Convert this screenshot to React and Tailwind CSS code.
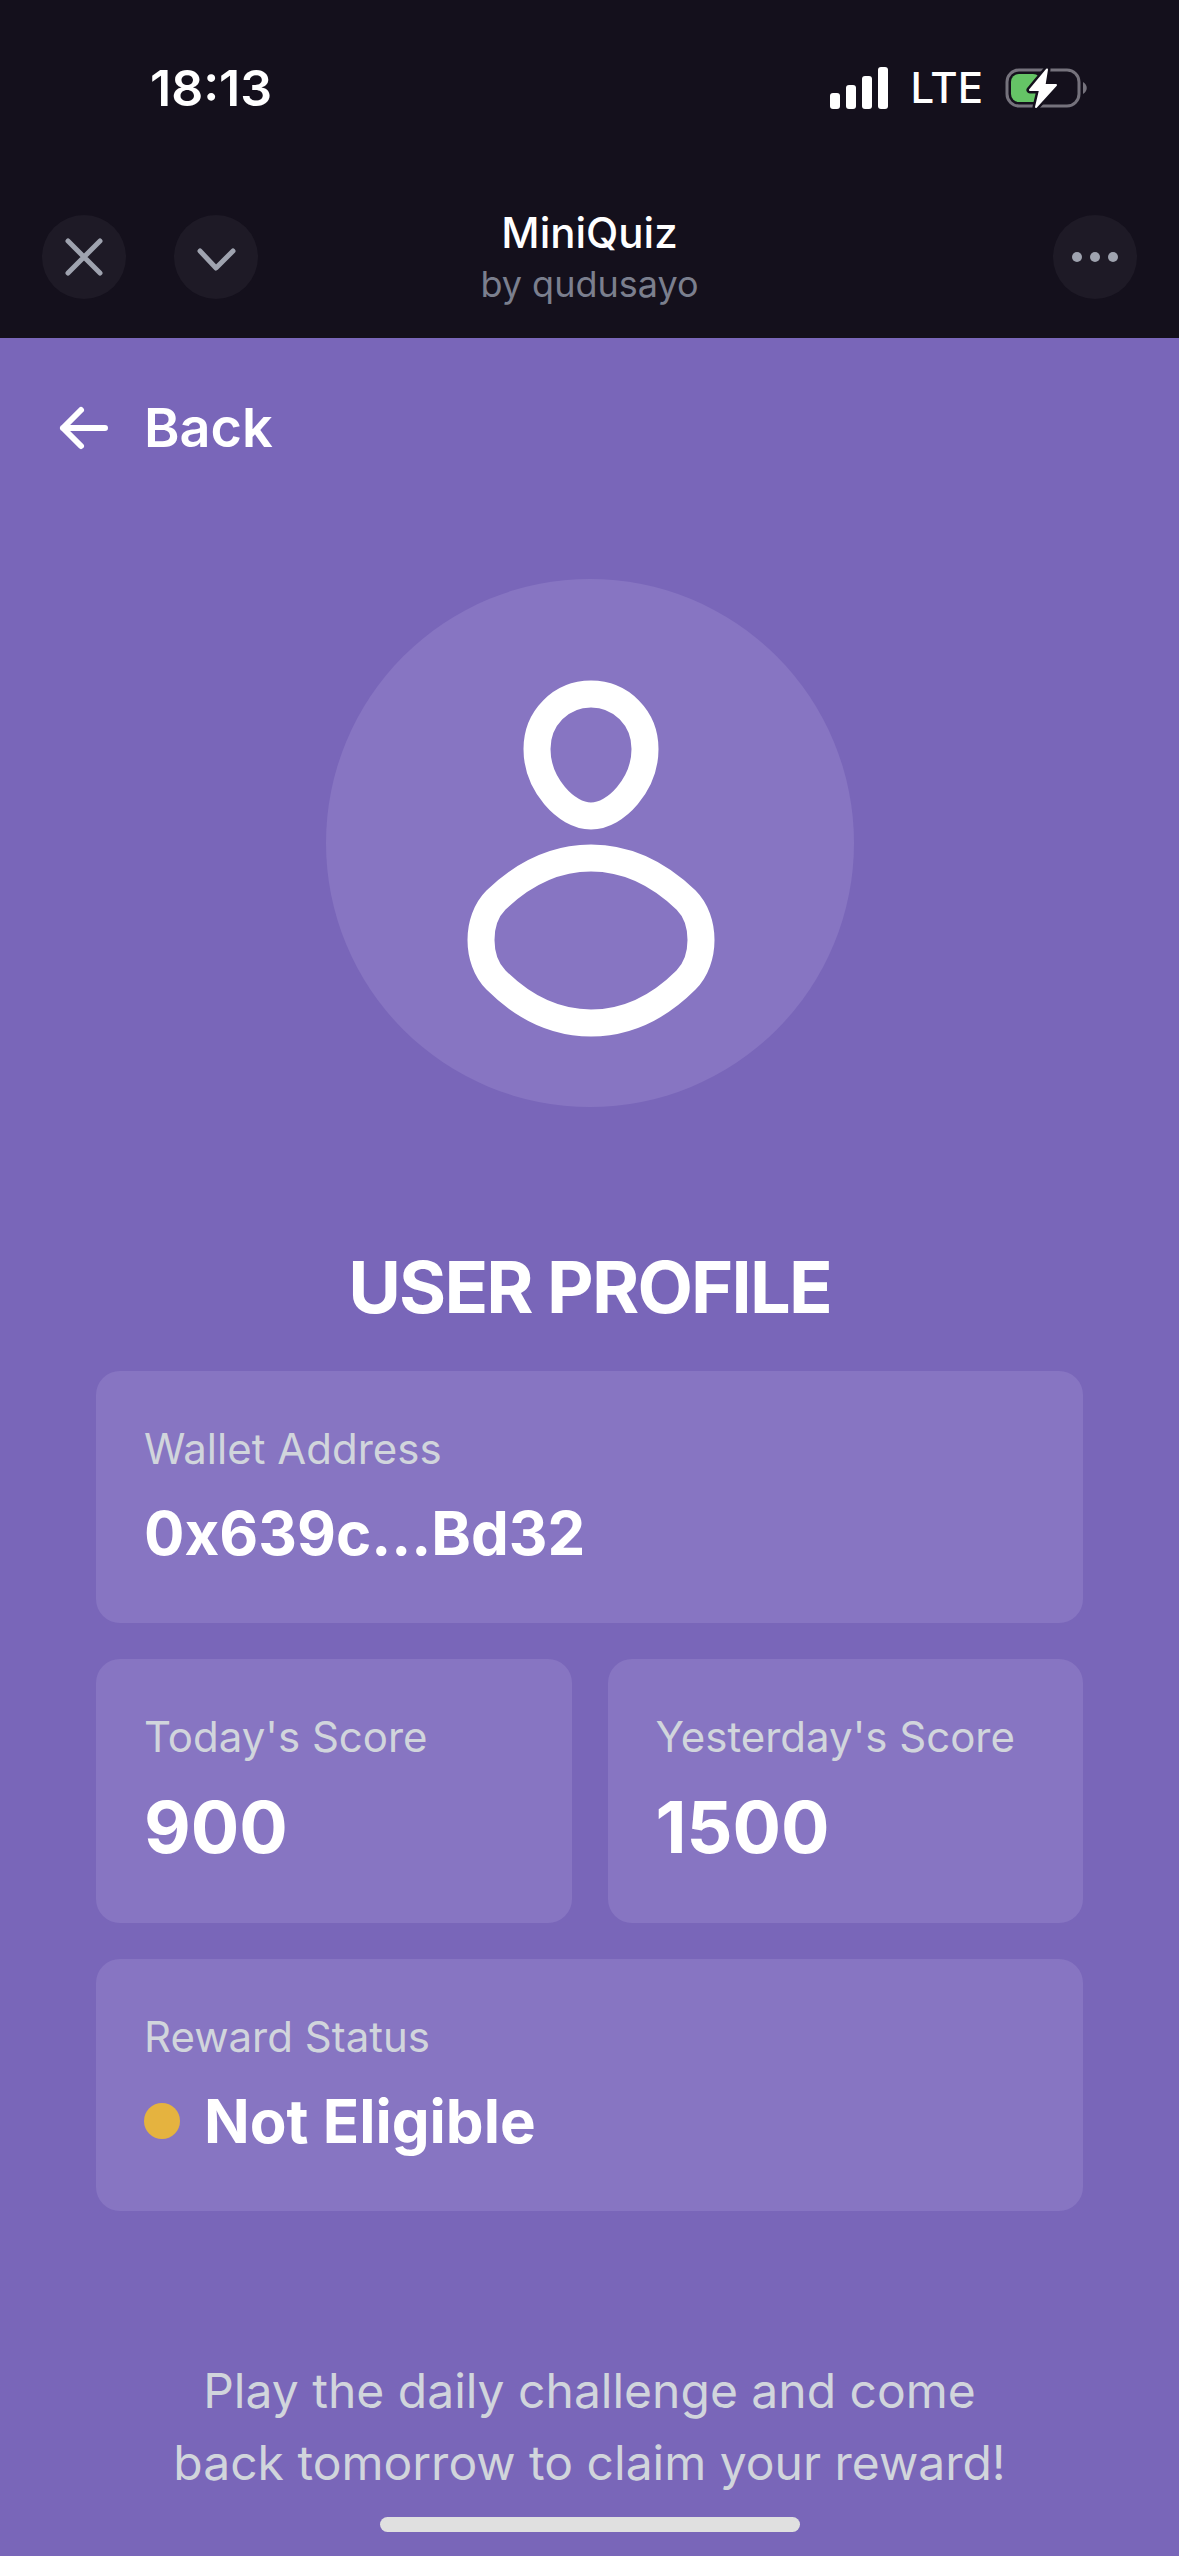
import React from "react";

function SignalIcon() {
  return (
    <svg viewBox="0 0 58 42" className="h-[42px] w-[58px]" fill="white" aria-hidden="true">
      <rect x="0" y="26" width="10" height="16" rx="3" />
      <rect x="16" y="18" width="10" height="24" rx="3" />
      <rect x="32" y="9" width="10" height="33" rx="3" />
      <rect x="48" y="0" width="10" height="42" rx="3" />
    </svg>
  );
}

function BatteryIcon() {
  return (
    <svg viewBox="0 0 84 46" className="h-[46px] w-[84px]" fill="none" aria-hidden="true">
      <rect x="2" y="5" width="72" height="36" rx="12" stroke="#75727c" strokeWidth="3" />
      <path d="M78 17c5 3 5 9 0 12z" fill="#75727c" />
      <rect x="6" y="9" width="30" height="28" rx="8" fill="#65c466" />
      <path
        d="M42 4.500 25 25h10l-4 17 20-22H39.500z"
        fill="white"
        stroke="#14101c"
        strokeWidth="7"
        strokeLinejoin="round"
      />
      <path d="M42 4.500 25 25h10l-4 17 20-22H39.500z" fill="white" stroke="white" strokeWidth="2" strokeLinejoin="round" />
    </svg>
  );
}

function RoundButton({ label, children }) {
  return (
    <button type="button" aria-label={label} className="flex size-[84px] items-center justify-center rounded-full bg-[#1e1a26]">
      <svg
        viewBox="0 0 84 84"
        className="size-[84px]"
        fill="none"
        stroke="#9fa3af"
        strokeWidth="5"
        strokeLinecap="round"
        strokeLinejoin="round"
        aria-hidden="true"
      >
        {children}
      </svg>
    </button>
  );
}

function Avatar() {
  return (
    <div className="size-[528px] rounded-full bg-[#8775c2]">
      <svg viewBox="0 0 528 528" className="size-full" fill="none" stroke="white" strokeWidth="27" aria-label="User" role="img">
        <path d="M265 115C295 115 319 139 319 170C319 205 290 237 265 237C240 237 211 205 211 170C211 139 235 115 265 115Z" />
        <path d="M265 279C302 279 334 296 360 321C370 331 375 346 375 361C375 376 370 391 360 401C334 427 302 444 265 444C228 444 196 427 170 401C160 391 155 376 155 361C155 346 160 331 170 321C196 296 228 279 265 279Z" />
      </svg>
    </div>
  );
}

function Card({ label, children }) {
  return (
    <section className="flex flex-col gap-3 rounded-3xl bg-[#8775c2] p-12">
      <h2 className="text-[42px] leading-[60px] text-gray-300">{label}</h2>
      {children}
    </section>
  );
}

export default function App() {
  return (
    <div className="flex min-h-screen flex-col bg-[#7966b9] font-['Inter',sans-serif] text-white">
      <header className="bg-[#14101c]">
        <div className="flex h-[176px] items-center justify-between pr-[90px] pl-[150px]">
          <time className="text-[50px] leading-[60px] font-semibold">18:13</time>
          <div className="flex items-center gap-[22px]">
            <SignalIcon />
            <span className="text-[42px] leading-[48px] font-medium">LTE</span>
            <BatteryIcon />
          </div>
        </div>
        <div className="grid h-[162px] grid-cols-[1fr_auto_1fr] items-center px-[42px]">
          <div className="flex gap-12">
            <RoundButton label="Close">
              <path d="M26 26 58 58M58 26 26 58" />
            </RoundButton>
            <RoundButton label="Minimize">
              <path d="M26 36 42 53 59 36" />
            </RoundButton>
          </div>
          <div className="text-center">
            <h1 className="text-[42px] leading-[54px] font-medium">MiniQuiz</h1>
            <p className="text-4xl leading-[48px] text-[#7b7f8e]">by qudusayo</p>
          </div>
          <div className="flex justify-end">
            <RoundButton label="More options">
              <g fill="#9fa3af" stroke="none">
                <circle cx="24" cy="42" r="5" />
                <circle cx="42" cy="42" r="5" />
                <circle cx="60" cy="42" r="5" />
              </g>
            </RoundButton>
          </div>
        </div>
      </header>

      <nav className="flex px-12 pt-12">
        <button type="button" className="flex items-center gap-6 text-[54px] leading-[84px] font-semibold">
          <svg
            viewBox="0 0 72 72"
            className="size-[72px]"
            fill="none"
            stroke="white"
            strokeWidth="6"
            strokeLinecap="round"
            strokeLinejoin="round"
            aria-hidden="true"
          >
            <path d="M33 18 15 36 33 54M15 36H57" />
          </svg>
          Back
        </button>
      </nav>

      <main className="flex flex-col items-center px-24 pt-[109px]">
        <Avatar />
        <h1 className="mt-[132px] text-7xl leading-[96px] font-bold tracking-tight">USER PROFILE</h1>
        <div className="mt-9 flex w-full flex-col gap-9">
          <Card label="Wallet Address">
            <p className="text-6xl leading-[84px] font-bold">0x639c...Bd32</p>
          </Card>
          <div className="grid grid-cols-2 gap-9">
            <Card label="Today's Score">
              <p className="text-7xl leading-[96px] font-bold">900</p>
            </Card>
            <Card label="Yesterday's Score">
              <p className="text-7xl leading-[96px] font-bold">1500</p>
            </Card>
          </div>
          <Card label="Reward Status">
            <div className="flex items-center gap-6">
              <span className="size-9 rounded-full bg-[#e5b33f]" />
              <p className="text-6xl leading-[84px] font-bold">Not Eligible</p>
            </div>
          </Card>
        </div>
        <p className="mt-36 max-w-[860px] text-center text-5xl leading-[72px] text-gray-300">
          Play the daily challenge and come back tomorrow to claim your reward!
        </p>
      </main>

      <div className="mt-auto flex justify-center pt-[18px] pb-6">
        <div className="h-[15px] w-[420px] rounded-full bg-[#e0e0e0]" />
      </div>
    </div>
  );
}
